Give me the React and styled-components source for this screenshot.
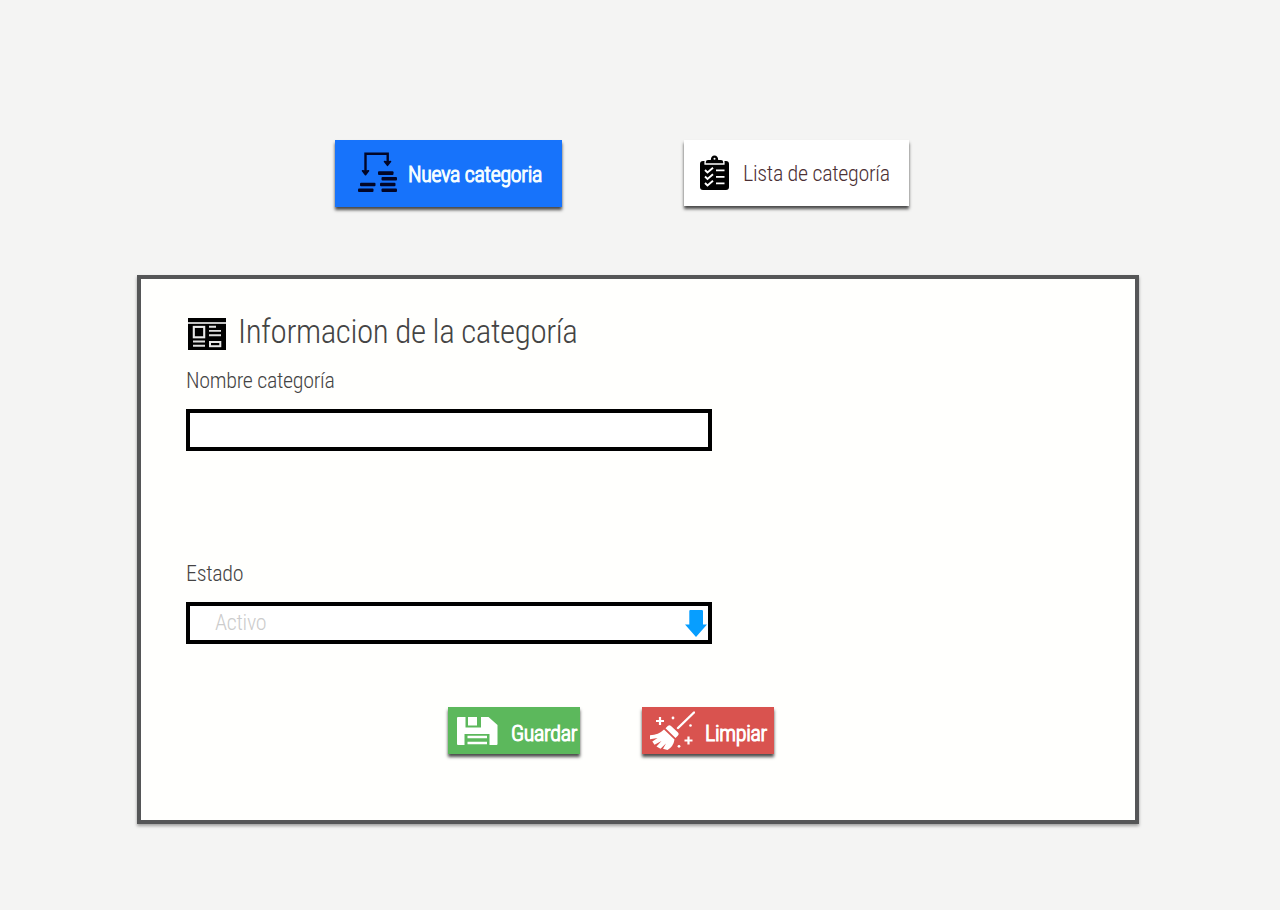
import React from 'react';
import styled, { createGlobalStyle } from 'styled-components';

const GlobalStyle = createGlobalStyle`
  * { box-sizing: border-box; }
  body { margin: 0; background: #f4f4f3; font-family: 'Roboto Condensed', Roboto, sans-serif; font-stretch: 75%; font-weight: 300; }
`;

const Page = styled.main`
  width: 1280px;
  height: 910px;
  padding-top: 140px;
  background: #f4f4f3;
  overflow: hidden;
`;

const Tabs = styled.nav`
  display: flex;
  gap: 122px;
  padding-left: 335px;
`;

const Button = styled.button`
  display: flex;
  align-items: flex-start;
  flex: none;
  width: ${(p) => p.$w}px;
  height: ${(p) => p.$h}px;
  padding: 0;
  border: 0;
  background: ${(p) => p.$bg};
  box-shadow: 0 3px 3px rgba(0, 0, 0, 0.7);
  font: inherit;
  text-align: left;
  svg { flex: none; display: block; margin: ${(p) => p.$icon}; }
`;

const Label = styled.span`
  display: block;
  white-space: nowrap;
  font-size: ${(p) => p.$size}px;
  line-height: 28px;
  letter-spacing: ${(p) => p.$ls ?? -0.3}px;
  color: ${(p) => p.$color || '#444'};
  margin: ${(p) => p.$m || 0};
  -webkit-text-stroke: ${(p) => (p.$bold ? '1.1px currentColor' : '0')};
`;

const Card = styled.section`
  width: 1002px;
  height: 549px;
  margin: 68px 0 0 137px;
  padding: 38px 45px 0;
  border: 4px solid #555657;
  background: #fffffd;
  box-shadow: 0 2px 3px rgba(0, 0, 0, 0.35);
`;

const Heading = styled.header`
  display: flex;
  height: 50px;
  svg { flex: none; margin: 1px 0 0 2px; }
`;

const Field = styled.div`
  height: ${(p) => p.$h}px;
`;

const Box = styled.div`
  display: flex;
  justify-content: space-between;
  width: 526px;
  height: 42px;
  margin-top: 14px;
  border: 4px solid #000;
  background: #fff;
  svg { flex: none; margin: 4px 1px 0 0; }
`;

const Actions = styled.div`
  display: flex;
  gap: 62px;
  padding-left: 262px;
`;

const SortIcon = () => (
  <svg width="40" height="41" viewBox="0 0 40 41" fill="#020627">
    <path d="M7.5 20V1.8H29.7V10" fill="none" stroke="#020627" strokeWidth="2.4" />
    <path d="M4.5 18.8Q7.5 19.8 10.5 18.8L7.5 22.7ZM26.5 9.6Q29.5 10.6 32.5 9.6L29.5 13.3Z" stroke="#020627" strokeWidth="1.6" strokeLinejoin="round" />
    <rect x="20" y="19.3" width="15.5" height="3.6" rx="1" />
    <rect x="23.5" y="25" width="15.5" height="3.6" rx="1" />
    <rect x="2" y="30.7" width="15.5" height="3.6" rx="1" />
    <rect x="22" y="30.7" width="15.5" height="3.6" rx="1" />
    <rect x="0" y="36.4" width="15.5" height="3.6" rx="1" />
    <rect x="23.5" y="36.4" width="15.5" height="3.6" rx="1" />
  </svg>
);

const ClipboardIcon = () => (
  <svg width="29" height="36" viewBox="0 0 29 36">
    <path d="M3 6H26Q29 6 29 9V32Q29 35 26 35H3Q0 35 0 32V9Q0 6 3 6Z" />
    <path d="M5.2 9V7.3Q5.2 4.8 7.5 4.8H10.5Q10.6 .4 14.5 .4T18.5 4.8H21.5Q23.8 4.8 23.8 7.3V9Z" fill="#fff" stroke="#fff" strokeWidth="1.6" />
    <path d="M5.8 8.2V7.3Q5.8 5 8 5H10.8Q11 .5 14.5 .5T18.2 5H21Q23.2 5 23.2 7.3V8.2Z" />
    <circle cx="14.5" cy="3.7" r="1" fill="#fff" />
    <path d="M5 15L7.5 17.5L13 12.8M5 21.5L7.5 24L13 19.3M5 28L7.5 30.5L13 25.8" fill="none" stroke="#fff" strokeWidth="1.9" />
    <path d="M16 15.3H24.5M16 21.8H24.5M16 28.3H24.5" stroke="#fff" strokeWidth="1.8" />
  </svg>
);

const NewsIcon = () => (
  <svg width="38" height="32" viewBox="0 0 38 32">
    <path d="M0 0H38V32H0Z" />
    <path d="M0 5H38" stroke="#c4c4c4" strokeWidth="2" />
    <rect x="5.8" y="8.9" width="10.4" height="10.4" fill="none" stroke="#e8e8e8" strokeWidth="2.1" />
    <rect x="22" y="24" width="10.3" height="4.2" fill="none" stroke="#e8e8e8" strokeWidth="2" />
    <path d="M5 23.5H17M5 27.8H17M21 8.8H28M21 12.9H33M21 17.2H33" stroke="#e0e0e0" strokeWidth="1.9" />
  </svg>
);

const ArrowIcon = () => (
  <svg width="22" height="27" viewBox="0 0 22 27">
    <path d="M4.3 1Q4.3 0 5.3 0H16.7Q18 0 18 1V14.5H22L11 27L0 14.5H4.3Z" fill="#079eff" />
  </svg>
);

const SaveIcon = () => (
  <svg width="41" height="28" viewBox="0 0 41 28">
    <path d="M1 0H8.5V10.5H27.5V0H31.5L40.5 8V27Q40.5 28 39.5 28H32.5V17H7.5V28H1Q0 28 0 27V1Q0 0 1 0Z" fill="#fff" />
    <path d="M11 0H20V8.5H11ZM24 0H28V11H24Z" fill="#fff" />
    <path d="M10.5 20H30M10.5 26H30" stroke="#fff" strokeWidth="2.7" />
  </svg>
);

const BroomIcon = () => (
  <svg width="45" height="40" viewBox="0 0 45 40" fill="#fff">
    <path d="M28 17L44 1.5" stroke="#fff" strokeWidth="2.4" strokeLinecap="round" />
    <path d="M18 14.8Q19.5 13.5 21 15L28 21.5Q29.5 23 28 24.5L25.5 27L15.5 17.3Z" />
    <path d="M14 18.5L24.5 28.5Q23.5 35.5 17.5 39L13 37.8L16 32.5L10.5 37.8L6.5 35.5L11.5 30L4.5 33.8L2.3 30.5L7.5 27L0 28.3V24.3Q8.5 24 14 18.5Z" />
    <path d="M10 6V14M6 10H14M38.5 25.5V33.5M34.5 29.5H42.5" stroke="#fff" strokeWidth="2.2" />
    <circle cx="23" cy="7" r="1.4" /><circle cx="40.5" cy="14.5" r="1.3" /><circle cx="29" cy="35.3" r="1.4" />
  </svg>
);

export default function App() {
  return (
    <>
      <GlobalStyle />
      <Page>
        <Tabs>
          <Button $w={227} $h={67} $bg="#1773fb" $icon="12px 0 0 23px">
            <SortIcon />
            <Label $size={22} $bold $color="#f5fdff" $m="21px 0 0 10px">Nueva categoria</Label>
          </Button>
          <Button $w={225} $h={66} $bg="#fff" $icon="15px 0 0 16px">
            <ClipboardIcon />
            <Label $size={22} $color="#4b3034" $m="20px 0 0 14px">Lista de categoría</Label>
          </Button>
        </Tabs>
        <Card>
          <Heading>
            <NewsIcon />
            <Label $size={33} $ls={-0.42} $m="1px 0 0 12px">Informacion de la categoría</Label>
          </Heading>
          <Field $h={193}>
            <Label $size={22}>Nombre categoría</Label>
            <Box />
          </Field>
          <Field $h={147}>
            <Label $size={22}>Estado</Label>
            <Box>
              <Label $size={22} $color="#ccc" $m="3px 0 0 25px">Activo</Label>
              <ArrowIcon />
            </Box>
          </Field>
          <Actions>
            <Button $w={132} $h={47} $bg="#5cb85c" $icon="10px 0 0 9px">
              <SaveIcon />
              <Label $size={22} $bold $color="#fff" $m="13px 0 0 13px">Guardar</Label>
            </Button>
            <Button $w={132} $h={47} $bg="#d9534f" $icon="4px 0 0 8px">
              <BroomIcon />
              <Label $size={22} $bold $color="#fff" $m="13px 0 0 10px">Limpiar</Label>
            </Button>
          </Actions>
        </Card>
      </Page>
    </>
  );
}
